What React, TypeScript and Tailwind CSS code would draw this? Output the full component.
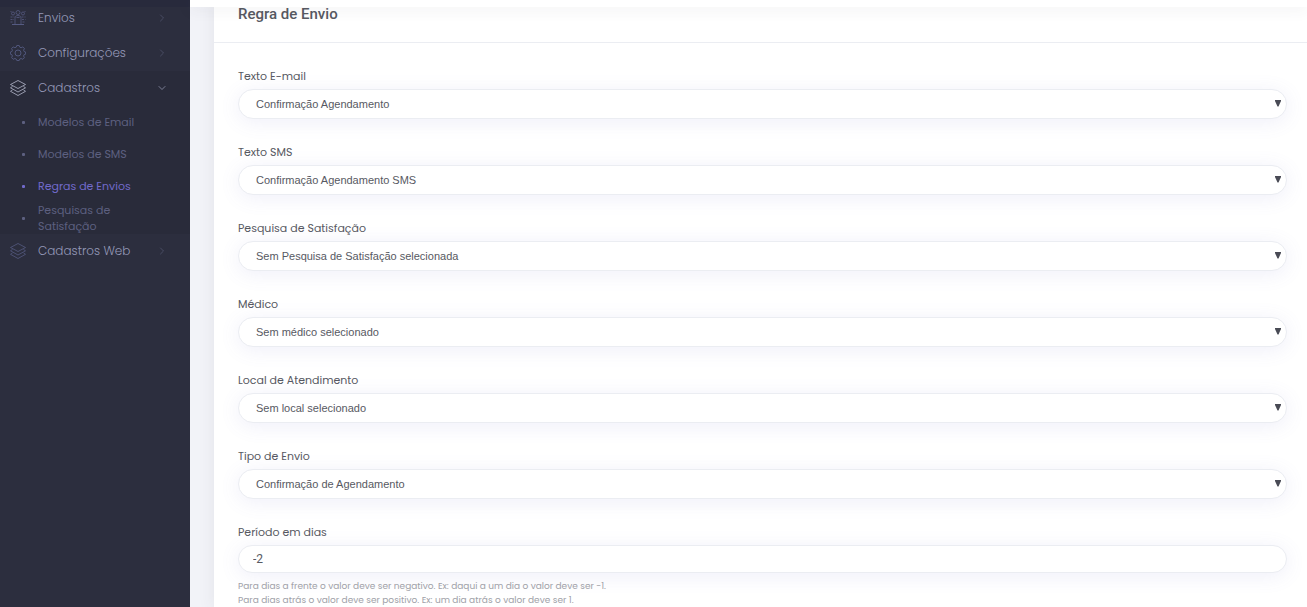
import { useState } from "react"
import { ChevronDown, ChevronRight } from "lucide-react"
import clsx from "clsx"

const subItems = ["Modelos de Email", "Modelos de SMS", "Regras de Envios", "Pesquisas de Satisfação"]

const selects = [
  { id: "email", label: "Texto E-mail", value: "Confirmação Agendamento" },
  { id: "sms", label: "Texto SMS", value: "Confirmação Agendamento SMS" },
  { id: "pesquisa", label: "Pesquisa de Satisfação", value: "Sem Pesquisa de Satisfação selecionada" },
  { id: "medico", label: "Médico", value: "Sem médico selecionado" },
  { id: "local", label: "Local de Atendimento", value: "Sem local selecionado" },
  { id: "tipo", label: "Tipo de Envio", value: "Confirmação de Agendamento" },
]

const labelClass = "mb-1 block text-[11px] leading-[18px] text-[#575962]"

const fieldClass =
  "block w-full rounded-full border border-[#ebedf2] bg-white text-[#575962] shadow-[0_3px_20px_rgba(113,106,202,0.11)] outline-none"

function UsersIcon() {
  return (
    <svg viewBox="0 0 16 16" className="size-4" fill="none" stroke="currentColor" strokeWidth="0.8">
      <circle cx="8" cy="2.5" r="2" />
      <path d="M5 14V8.500C5 6.500 6 5.500 8 5.500S11 6.500 11 8.500V14M6.500 7.500h3" />
      <circle cx="3" cy="3.500" r="1.500" />
      <circle cx="13" cy="3.500" r="1.500" />
      <path
        d="M.5 1.500h1M14.500 1.500h1M.5 7h4M.5 9.500h3.500M.5 12h3M11.500 7h4M12 9.500h3.500M12.500 12h3"
        strokeDasharray="2 1"
      />
      <path d="M2 14.500h12" strokeWidth="1" />
    </svg>
  )
}

function GearIcon() {
  return (
    <svg viewBox="0 0 16 16" className="size-4" fill="none" stroke="currentColor" strokeWidth="0.9">
      <path d="M6.800.5h2.400l.6 1.700 1.300.5 1.700-.8 1.600 1.600-.8 1.700.5 1.300 1.500.5v2.200l-1.500.5-.5 1.300.8 1.700-1.600 1.600-1.700-.8-1.300.5-.6 1.500H6.800l-.6-1.500-1.300-.5-1.700.8-1.600-1.600.8-1.700-.5-1.300L.4 9.200V7l1.500-.5.5-1.300-.8-1.700 1.600-1.600 1.700.8 1.300-.5z" />
      <circle cx="8" cy="8" r="3" />
    </svg>
  )
}

function LayersIcon() {
  return (
    <svg viewBox="0 0 16 16" className="size-4" fill="none" stroke="currentColor" strokeWidth="0.8">
      <path d="M8 .5 15.500 4.500 8 8.500.5 4.500z" />
      <path d="M2.500 6.500.5 7.800 8 12l7.500-4.200-2-1.300" />
      <path d="M2.500 10 .5 11.300 8 15.500l7.500-4.200-2-1.300" />
    </svg>
  )
}

function MenuItem({ icon, label, open = false }: { icon: React.ReactNode; label: string; open?: boolean }) {
  const Arrow = open ? ChevronDown : ChevronRight
  return (
    <a href="#" className="flex h-[35px] items-center pr-[22px] pb-px pl-2.5 text-[#9599b8]">
      <span className={clsx("mr-3", open ? "text-[#b4b7cc]" : "text-[#555b82]")}>{icon}</span>
      <span className="flex-1 text-xs leading-4 font-light">{label}</span>
      <Arrow className={clsx("size-3", open ? "text-[#9699b3]" : "text-[#51556f]")} strokeWidth={1.5} />
    </a>
  )
}

export default function App() {
  const [period, setPeriod] = useState("-2")

  return (
    <div className="relative flex min-h-screen bg-[#f2f3f8] font-['Poppins','Inter',sans-serif]">
      <header className="absolute inset-x-0 top-0 z-10 flex h-[7px]">
        <div className="w-[190px] bg-[#282a3c]" />
        <div className="flex-1 bg-white shadow-[0_1px_15px_1px_rgba(69,65,78,0.08)]" />
      </header>

      <aside className="w-[190px] shrink-0 bg-[#2c2e3e] pt-px">
        <nav>
          <MenuItem icon={<UsersIcon />} label="Envios" />
          <MenuItem icon={<GearIcon />} label="Configurações" />
          <div className="bg-[#292b3a]">
            <MenuItem icon={<LayersIcon />} label="Cadastros" open />
            <ul>
              {subItems.map((item) => {
                const active = item === "Regras de Envios"
                return (
                  <li key={item}>
                    <a
                      href="#"
                      className={clsx(
                        "flex h-8 items-center pr-10 pl-[22px] text-[11px] leading-4",
                        active ? "text-[#716aca]" : "text-[#5d6080]"
                      )}
                    >
                      <span className="mr-[13px] size-[3px] shrink-0 rounded-[1px] bg-current" />
                      <span>{item}</span>
                    </a>
                  </li>
                )
              })}
            </ul>
          </div>
          <MenuItem icon={<LayersIcon />} label="Cadastros Web" />
        </nav>
      </aside>

      <main className="min-w-0 flex-1 pl-6">
        <section className="min-h-screen bg-white shadow-[0_1px_15px_1px_rgba(69,65,78,0.08)]">
          <div className="flex h-[43px] items-start border-b border-[#ebedf2] px-6 pt-1">
            <h3 className="font-['Roboto',sans-serif] text-[15px] leading-5 font-medium text-[#575962]">Regra de Envio</h3>
          </div>
          <form className="pt-6 pr-5 pl-6">
            {selects.map((field) => (
              <div key={field.id} className="mb-6">
                <label htmlFor={field.id} className={labelClass}>
                  {field.label}
                </label>
                <div className="relative">
                  <select
                    id={field.id}
                    className={clsx(
                      fieldClass,
                      "h-[30px] appearance-none px-[17px] font-['Liberation_Sans',sans-serif] text-[11px]"
                    )}
                  >
                    <option>{field.value}</option>
                  </select>
                  <svg viewBox="0 0 6 7" className="pointer-events-none absolute top-[11px] right-1.5 h-[7px] w-1.5">
                    <path d="M0 0h6v1L3.500 6.500h-1L0 1z" fill="#494b55" />
                  </svg>
                </div>
              </div>
            ))}
            <label htmlFor="periodo" className={labelClass}>
              Período em dias
            </label>
            <input
              id="periodo"
              value={period}
              onChange={(e) => setPeriod(e.target.value)}
              className={clsx(fieldClass, "h-7 px-3.5 font-['Roboto',sans-serif] text-xs")}
            />
            <p className="pt-1.5 text-[9px] leading-[14px] text-[#a0a1a8]">
              Para dias a frente o valor deve ser negativo. Ex: daqui a um dia o valor deve ser -1.
              <br />
              Para dias atrás o valor deve ser positivo. Ex: um dia atrás o valor deve ser 1.
            </p>
          </form>
        </section>
      </main>
    </div>
  )
}
